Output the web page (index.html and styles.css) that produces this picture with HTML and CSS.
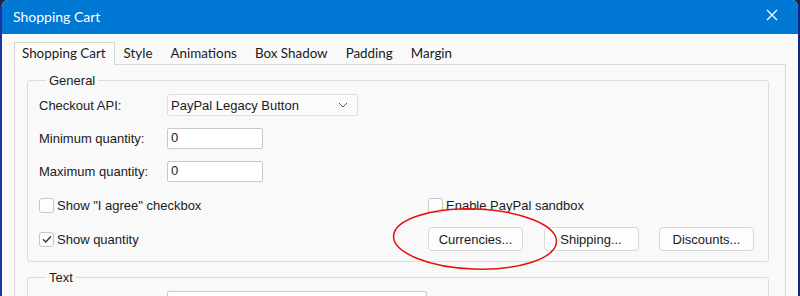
FILE: index.html
```html
<!DOCTYPE html>
<html lang="en">
<head>
    <meta charset="UTF-8">
    <title>Shopping Cart</title>
    <link rel="stylesheet" href="styles.css">
</head>
<body>
    <div class="window">
        <div class="titlebar">
            <span class="title">Shopping Cart</span>
            <svg class="close" width="12" height="12" viewBox="0 0 12 12">
                <path d="M1 1 L11 11 M11 1 L1 11" stroke="#fff" stroke-width="1.3" fill="none"/>
            </svg>
        </div>
        <div class="content">
            <div class="tabs">
                <span class="tab active">Shopping Cart</span>
                <span class="tab">Style</span>
                <span class="tab">Animations</span>
                <span class="tab">Box Shadow</span>
                <span class="tab">Padding</span>
                <span class="tab">Margin</span>
            </div>
            <div class="panel">
                <fieldset class="group">
                    <legend>General</legend>
                    <div class="row r-select">
                        <span class="label">Checkout API:</span>
                        <div class="select">
                            <span>PayPal Legacy Button</span>
                            <svg width="10" height="6" viewBox="0 0 10 6">
                                <path d="M1 1 L5 5 L9 1" stroke="#555" stroke-width="1" fill="none"/>
                            </svg>
                        </div>
                    </div>
                    <div class="row r-input">
                        <span class="label">Minimum quantity:</span>
                        <div class="input">0</div>
                    </div>
                    <div class="row r-input">
                        <span class="label">Maximum quantity:</span>
                        <div class="input">0</div>
                    </div>
                    <div class="row r-check">
                        <div class="left"><span class="check"></span>Show "I agree" checkbox</div>
                        <div class="item"><span class="check"></span>Enable PayPal sandbox</div>
                    </div>
                    <div class="row r-buttons">
                        <div class="left">
                            <span class="check on">
                                <svg width="12" height="12" viewBox="0 0 12 12">
                                    <path d="M2 6.2 L4.8 9 L10 3.2" stroke="#333" stroke-width="1.3" fill="none"/>
                                </svg>
                            </span>Show quantity
                        </div>
                        <div class="buttons">
                            <span class="btn">Currencies...</span>
                            <span class="btn">Shipping...</span>
                            <span class="btn">Discounts...</span>
                        </div>
                    </div>
                </fieldset>
                <fieldset class="group">
                    <legend>Text</legend>
                    <div class="row r-input">
                        <span class="label"></span>
                        <div class="input wide"></div>
                    </div>
                </fieldset>
            </div>
        </div>
        <svg class="mark" width="168" height="66" viewBox="0 0 168 66">
            <ellipse cx="84" cy="33" rx="81.5" ry="30" stroke="#e3120b" stroke-width="1.5" fill="none" transform="rotate(2 84 33)"/>
        </svg>
    </div>
</body>
</html>
```

FILE: styles.css
```css
html {
    background-color: #1d2536;
}
body {
    margin: 0;
    width: 800px;
    height: 296px;
    overflow: hidden;
    font-family: "Liberation Sans", Arial, sans-serif;
    font-size: 13px;
    color: #1b1b1b;
}
.window {
    position: relative;
    height: 296px;
    background-color: #f9f9f9;
    border-left: 2px solid #1a35a8;
    border-right: 2px solid #12267e;
    border-radius: 8px 8px 0 0;
    overflow: hidden;
}
.titlebar {
    height: 34px;
    background-color: #0078d4;
    display: flex;
    align-items: center;
    justify-content: space-between;
    padding: 0 20px 0 11px;
    color: #fff;
}
.title {
    font-family: Lato, "Noto Sans", sans-serif;
    font-size: 14px;
    padding-bottom: 2px;
}
.close {
    margin-bottom: 4px;
}
.content {
    padding: 8px 12px 0 12px;
}
.tabs {
    display: flex;
    height: 22px;
    font-family: Lato, "Noto Sans", sans-serif;
    font-size: 13.4px;
}
.tab {
    padding: 0 8px;
    line-height: 21px;
    border: 1px solid transparent;
    border-bottom: none;
    color: #1a1a1a;
}
.tab.active {
    padding: 0 8px 0 7px;
    background-color: #fcfcfc;
    border-color: #d6d6d6;
    position: relative;
    z-index: 1;
    height: 22px;
}
.panel {
    border: 1px solid #d9d9d9;
    height: 260px;
}
.group {
    margin: 8px 16px 0 12px;
    padding: 6px 10px 10px 11px;
    border: 1px solid #dcdcdc;
    border-radius: 3px;
}
.group legend {
    padding: 0 3px;
    margin-left: 7px;
    line-height: 15px;
}
.row {
    display: flex;
    align-items: center;
}
.label {
    width: 128px;
}
.r-select {
    height: 22px;
}
.r-input {
    height: 21px;
    margin-top: 12px;
}
.group .r-input:first-of-type {
    margin-top: 0;
}
.r-check {
    height: 20px;
    margin-top: 13px;
}
.r-buttons {
    height: 24px;
    margin-top: 12px;
}
.select {
    height: 20px;
    width: 177px;
    border: 1px solid #dedede;
    border-radius: 3px;
    background-color: #fcfcfc;
    display: flex;
    align-items: center;
    justify-content: space-between;
    padding: 0 9px 0 3px;
}
.input {
    width: 96px;
    height: 21px;
    border: 1px solid #c9c9c9;
    border-radius: 2px;
    background-color: #fff;
    padding: 2px 0 0 3px;
    box-sizing: border-box;
    line-height: 14px;
}
.input.wide {
    width: 260px;
}
.left {
    width: 389px;
    display: flex;
    align-items: center;
}
.item {
    display: flex;
    align-items: center;
}
.check {
    width: 15px;
    height: 15px;
    border: 1px solid #c6c6c6;
    border-radius: 3px;
    background-color: #fdfdfd;
    margin-right: 3px;
    box-sizing: border-box;
    display: flex;
    align-items: center;
    justify-content: center;
}
.check.on svg {
    display: block;
}
.buttons {
    display: flex;
    gap: 20.5px;
}
.btn {
    width: 95px;
    height: 24px;
    box-sizing: border-box;
    border: 1px solid #d7d7d7;
    border-radius: 4px;
    background-color: #fdfdfd;
    display: flex;
    align-items: center;
    justify-content: center;
}
.mark {
    position: absolute;
    left: 389px;
    top: 206px;
}
```
